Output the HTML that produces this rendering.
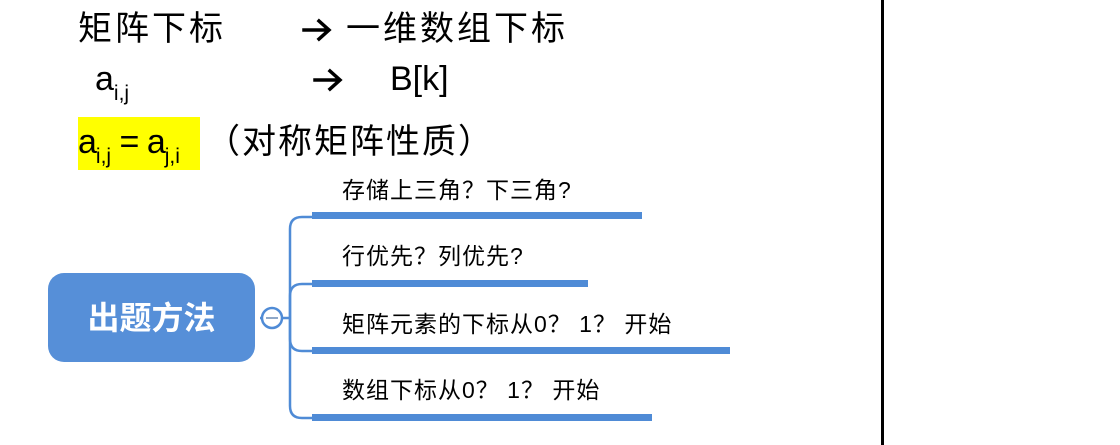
<!DOCTYPE html>
<html><head><meta charset="utf-8"><style>
body{margin:0;width:1120px;height:445px;background:#fff;position:relative;overflow:hidden;font-family:"Liberation Sans","Noto Sans CJK SC",sans-serif;color:#000}
.a{position:absolute;white-space:nowrap;line-height:1}
.big{font-size:34px;letter-spacing:3px}
.s{font-size:23px;letter-spacing:1px}
.u{position:absolute;height:7px;background:#4f8bd6;left:312px}
sub{font-size:21px;vertical-align:-10px;letter-spacing:0}
</style></head><body>
<div style="position:absolute;left:881px;top:0;width:3px;height:445px;background:#000"></div>

<div class="a big" style="left:78px;top:12px">矩阵下标</div>
<div class="a big" style="left:346px;top:12px">一维数组下标</div>
<div class="a" style="left:95px;top:62px;font-size:34px">a<sub>i,j</sub></div>
<div class="a" style="left:390px;top:62px;font-size:34px">B[k]</div>
<div style="position:absolute;left:78px;top:117px;width:122px;height:53px;background:#ffff00"></div>
<div class="a" style="left:78px;top:125px;font-size:34px;letter-spacing:-1px">a<sub>i,j</sub> = a<sub>j,i</sub></div>
<div class="a big" style="left:206px;top:125px;letter-spacing:2px">（对称矩阵性质）</div>

<div style="position:absolute;left:48px;top:273px;width:207px;height:89px;background:#568fd8;border-radius:16px"></div>
<div class="a" style="left:48px;top:302px;width:207px;text-align:center;color:#fff;font-size:32px;font-weight:bold">出题方法</div>

<svg style="position:absolute;left:0;top:0" width="1120" height="445">
<g fill="none" stroke="#000" stroke-width="3.5" stroke-linecap="square">
<path d="M304 30 H328 M319 21 L329 30 L319 39"/>
<path d="M315 80 H339 M330 71 L340 80 L330 89"/>
</g>
<g fill="none" stroke="#4f8bd6" stroke-width="2.5">
<path d="M312 217 H302 Q290 217 290 229 V406 Q290 418 302 418 H312"/>
<path d="M312 284 H302 Q290 284 290 296 V339 Q290 351 302 351 H312"/>
<path d="M260 318 H290"/>
<circle cx="272" cy="318" r="10" fill="#fff"/>
</g>
<path d="M266 318 H278" stroke="#8fa8c8" stroke-width="2"/>
</svg>

<div class="u" style="top:212px;width:330px"></div>
<div class="u" style="top:280px;width:276px"></div>
<div class="u" style="top:347px;width:418px"></div>
<div class="u" style="top:414px;width:340px"></div>

<div class="a s" style="left:342px;top:179px">存储上三角？下三角?</div>
<div class="a s" style="left:342px;top:245px">行优先？列优先?</div>
<div class="a s" style="left:342px;top:313px">矩阵元素的下标从0？ 1？ 开始</div>
<div class="a s" style="left:342px;top:379px">数组下标从0？ 1？ 开始</div>
</body></html>
